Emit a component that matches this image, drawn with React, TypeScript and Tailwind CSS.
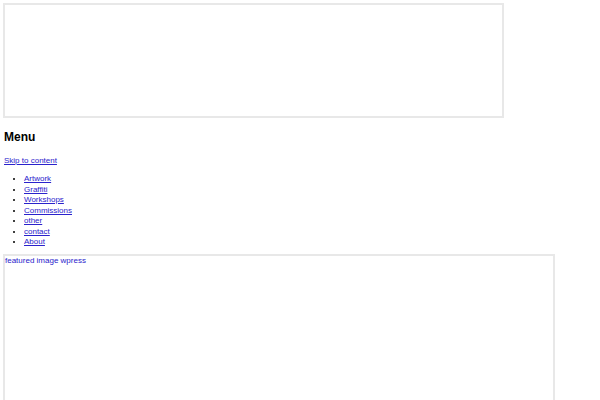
export default function App() {
  const items = ['Artwork', 'Graffiti', 'Workshops', 'Commissions', 'other', 'contact', 'About']
  return (
    <div className="h-[400px] overflow-hidden bg-white font-['Liberation_Sans',Arial,sans-serif] text-black">
      {/* Header image */}
      <div className="ml-[3px] mt-[3px] h-[115px] w-[501px] border-2 border-[#e8e8e8]" />

      {/* Nav */}
      <h2 className="ml-1 mt-[11px] text-[12px] font-bold leading-[16px]">Menu</h2>
      <a href="#" className="ml-1 mt-[11px] block text-[8px] leading-[10px] text-[#2a22cc] underline">
        Skip to content
      </a>
      <ul className="mt-[8px] list-disc pl-6 text-[8px] leading-[10.5px]">
        {items.map((item) => (
          <li key={item}>
            <a href="#" className="text-[#2a22cc] underline">
              {item}
            </a>
          </li>
        ))}
      </ul>

      {/* Featured image */}
      <div className="ml-[3px] mt-[6px] h-[200px] w-[552px] border-2 border-[#e8e8e8] text-[8px] leading-[10px] text-[#2a22cc]">
        featured image wpress
      </div>
    </div>
  )
}
